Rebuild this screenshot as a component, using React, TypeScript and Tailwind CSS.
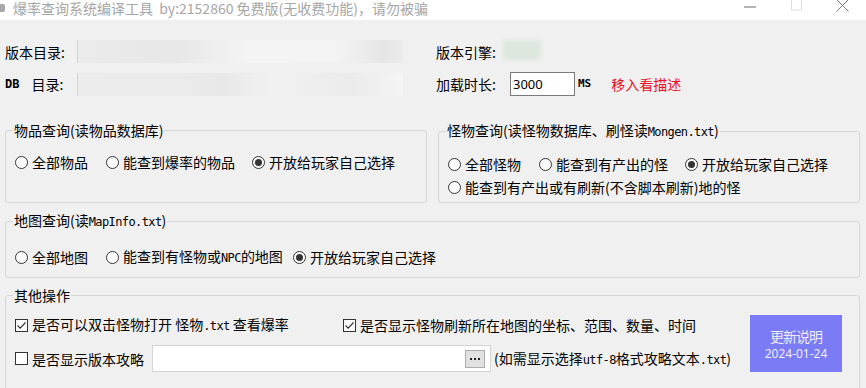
import React from 'react'

const mono = "font-['DejaVu_Sans_Mono',monospace] text-[12px] tracking-[-0.6px]"

const Radio = ({ checked, className, children }: { checked?: boolean; className?: string; children: React.ReactNode }) => {
  return (
    <div className={'flex items-center whitespace-nowrap h-[20px] ' + (className || '')}>
      <span className="w-[13px] h-[13px] shrink-0 rounded-full border border-[#333] bg-white flex items-center justify-center">
        {checked && <span className="w-[7px] h-[7px] rounded-full bg-[#333]" />}
      </span>
      <span className="ml-[4px]">{children}</span>
    </div>
  )
}

const Check = ({ checked, className, children }: { checked?: boolean; className?: string; children: React.ReactNode }) => {
  return (
    <div className={'flex items-center whitespace-nowrap h-[20px] ' + (className || '')}>
      <span className="w-[13px] h-[13px] shrink-0 border border-[#333] bg-white flex items-center justify-center">
        {checked && (
          <svg width="11" height="11" viewBox="0 0 11 11" fill="none">
            <path d="M1.5 5.5 L4.2 8.2 L9.5 2.5" stroke="#333" strokeWidth="1.2" />
          </svg>
        )}
      </span>
      <span className="ml-[4px]">{children}</span>
    </div>
  )
}

const App = () => {
  return (
    <div className="w-[866px] h-[388px] overflow-hidden bg-[#f0f0f0] font-['Noto_Sans_CJK_SC',sans-serif] text-[14px] leading-[20px] text-black">
      {/* title bar */}
      <div className="h-[20px] bg-white flex items-start overflow-hidden">
        <div className="w-[5px] h-[8px] mt-[4px] bg-[#a8a8a8] rounded-r-[2px]" />
        <div className="ml-[8px] -mt-[2px] text-[#a6a6a6] whitespace-nowrap">
          爆率查询系统编译工具&nbsp;&nbsp;by:2152860 免费版(无收费功能)，请勿被骗
        </div>
        <div className="ml-auto flex h-[20px]">
          <div className="w-[46px] flex justify-center pt-[6px]">
            <svg width="12" height="2" viewBox="0 0 12 2"><path d="M0 1 H12" stroke="#666" strokeWidth="1" /></svg>
          </div>
          <div className="w-[46px] flex justify-center">
            <svg width="11" height="11" viewBox="0 0 11 11"><rect x="0.5" y="-1" width="10" height="11" fill="none" stroke="#dedede" /></svg>
          </div>
          <div className="w-[47px] flex justify-center">
            <svg width="13" height="12" viewBox="0 0 13 12"><path d="M0.5 -0.5 L12.5 11.5 M12.5 -0.5 L0.5 11.5" stroke="#777" strokeWidth="1" /></svg>
          </div>
        </div>
      </div>

      <div className="pl-[5px] pr-[6px]">
        {/* row 1 */}
        <div className="mt-[20px] flex items-center h-[23px]">
          <div className="w-[72px]">版本目录:</div>
          <div className="w-[326px] h-[23px] border-l border-[#d2d2d2] bg-[linear-gradient(90deg,#ebebeb_0%,#e7e7e7_30%,#f4f4f4_52%,#f3f3f3_80%,#e5e5e5_94%,#ececec_100%)]" />
          <div className="ml-[33px] w-[67px]">版本引擎:</div>
          <div className="w-[38px] h-[20px] -mt-[4px] bg-[#dde7dd] blur-[2px]" />
        </div>

        {/* row 2 */}
        <div className="mt-[9px] flex items-center h-[24px]">
          <div className="w-[72px] flex items-center">
            <span className="font-['DejaVu_Sans_Mono',monospace] text-[12px] font-bold">DB</span>
            <span className="ml-[12px]">目录:</span>
          </div>
          <div className="w-[326px] h-[23px] border-l border-[#d2d2d2] bg-[linear-gradient(90deg,#ececec_0%,#ebebeb_30%,#e8e8e8_45%,#f1f1f1_60%,#ebebeb_85%,#f5f5f5_100%)]" />
          <div className="ml-[33px] w-[74px]">加载时长:</div>
          <div className="w-[65px] h-[24px] border border-[#7a7a7a] bg-white pl-[2px] text-[13px] leading-[22px] font-['Noto_Sans',sans-serif]">3000</div>
          <span className="ml-[3px] font-['DejaVu_Sans_Mono',monospace] text-[11px] font-bold">MS</span>
          <span className="ml-[20px] text-[#e81123]">移入看描述</span>
        </div>

        {/* groups row */}
        <div className="mt-[26px] flex gap-[11px]">
          <fieldset className="w-[422px] h-[81px] border border-[#d6d6d6] rounded-[3px] px-[9px]">
            <legend className="-ml-[2px] px-[1px] leading-[16px]">物品查询(读物品数据库)</legend>
            <div className="mt-[14px] flex">
              <Radio className="w-[91px]">全部物品</Radio>
              <Radio className="w-[146px]">能查到爆率的物品</Radio>
              <Radio checked>开放给玩家自己选择</Radio>
            </div>
          </fieldset>
          <fieldset className="w-[422px] h-[81px] border border-[#d6d6d6] rounded-[3px] px-[9px]">
            <legend className="-ml-[2px] px-[1px] leading-[16px]">
              怪物查询(读怪物数据库、刷怪读<span className={mono}>Mongen.txt</span>)
            </legend>
            <div className="mt-[14px] flex">
              <Radio className="w-[91px]">全部怪物</Radio>
              <Radio className="w-[146px]">能查到有产出的怪</Radio>
              <Radio checked>开放给玩家自己选择</Radio>
            </div>
            <div className="mt-[3px] flex">
              <Radio>能查到有产出或有刷新(不含脚本刷新)地的怪</Radio>
            </div>
          </fieldset>
        </div>

        {/* map group */}
        <fieldset className="mt-[9px] w-[855px] h-[66px] border border-[#d6d6d6] rounded-[3px] px-[9px]">
          <legend className="-ml-[2px] px-[1px] leading-[16px]">
            地图查询(读<span className={mono}>MapInfo.txt</span>)
          </legend>
          <div className="mt-[17px] flex">
            <Radio className="w-[91px]">全部地图</Radio>
            <Radio className="w-[187px]">能查到有怪物或<span className={mono}>NPC</span>的地图</Radio>
            <Radio checked>开放给玩家自己选择</Radio>
          </div>
        </fieldset>

        {/* other */}
        <fieldset className="mt-[9px] w-[855px] h-[110px] border border-[#d6d6d6] rounded-[3px] px-[9px]">
          <legend className="-ml-[2px] px-[1px] leading-[16px]">其他操作</legend>
          <div className="mt-[12px] flex">
            <div className="flex flex-col">
              <div className="flex">
                <Check checked className="w-[328px]">
                  是否可以双击怪物打开 怪物<span className={mono}>.txt</span> 查看爆率
                </Check>
                <Check checked>是否显示怪物刷新所在地图的坐标、范围、数量、时间</Check>
              </div>
              <div className="mt-[10px] flex items-center h-[27px]">
                <Check className="w-[137px]">是否显示版本攻略</Check>
                <div className="w-[339px] h-[27px] bg-white border border-[#d4d4d4] flex items-center justify-end pr-[5px]">
                  <div className="w-[20px] h-[18px] bg-[#e1e1e1] border border-[#adadad] flex items-center justify-center gap-[2px]">
                    <span className="w-[2px] h-[2px] bg-[#222]" />
                    <span className="w-[2px] h-[2px] bg-[#222]" />
                    <span className="w-[2px] h-[2px] bg-[#222]" />
                  </div>
                </div>
                <span className="ml-[3px] whitespace-nowrap">
                  (如需显示选择<span className={mono}>utf-8</span>格式攻略文本<span className={mono}>.txt</span>)
                </span>
              </div>
            </div>
            <button className="ml-auto mr-[8px] w-[92px] h-[57px] bg-[#7b7bf6] text-[#eeeeff] flex flex-col items-center justify-center">
              <span className="block text-[14px] leading-[19px] tracking-[-1px]">更新说明</span>
              <span className="block text-[12px] leading-[15px] font-['Noto_Sans',sans-serif]">2024-01-24</span>
            </button>
          </div>
        </fieldset>
      </div>
    </div>
  )
}

export default App
